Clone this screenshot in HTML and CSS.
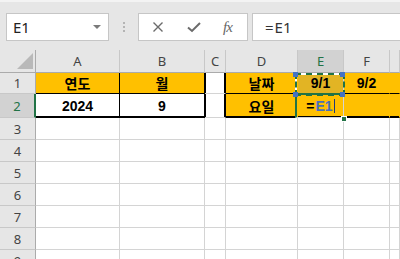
FILE: index.html
```html
<!DOCTYPE html>
<html>
<head>
<meta charset="utf-8">
<link rel="stylesheet" href="styles.css">
</head>
<body>
<div class="app">
  <div class="toolbar">
    <div class="namebox">
      <span class="name">E1</span>
      <span class="caret"></span>
    </div>
    <div class="grip"><i></i><i></i><i></i></div>
    <div class="fxbox">
      <svg class="ico" width="12" height="12" viewBox="0 0 12 12"><path d="M1.5 1.5L10.5 10.5M10.5 1.5L1.5 10.5" stroke="#6b6b6b" stroke-width="1.4" fill="none"/></svg>
      <svg class="ico" width="14" height="12" viewBox="0 0 14 12"><path d="M1 6.5L5 10L13 2" stroke="#6b6b6b" stroke-width="2" fill="none"/></svg>
      <span class="fx">fx</span>
    </div>
    <div class="formula"><span class="feq">=</span><span>E1</span></div>
  </div>
  <div class="sheet">
    <div class="corner"><span class="tri"></span></div>
    <div class="hd">A</div>
    <div class="hd">B</div>
    <div class="hd">C</div>
    <div class="hd">D</div>
    <div class="hd sel">E</div>
    <div class="hd">F</div>
    <div class="hd"></div>

    <div class="rh">1</div>
    <div class="c y bb br">연도</div>
    <div class="c y bb bthr">월</div>
    <div class="c gap"></div>
    <div class="c y bb nob">날짜</div>
    <div class="c yd bb nob">9/1</div>
    <div class="c y bb nob">9/2</div>
    <div class="c y bb nob"></div>

    <div class="rh sel2">2</div>
    <div class="c bthb br">2024</div>
    <div class="c bthb bthr">9</div>
    <div class="c gap"></div>
    <div class="c y bthb nob">요일</div>
    <div class="c y bthb nob edit"><span class="eq">=</span><span class="ref">E1</span><span class="cursor"></span></div>
    <div class="c y bthb nob"></div>
    <div class="c y bthb nob"></div>

    <div class="rh">3</div><div class="c"></div><div class="c"></div><div class="c"></div><div class="c"></div><div class="c"></div><div class="c"></div><div class="c"></div>
    <div class="rh">4</div><div class="c"></div><div class="c"></div><div class="c"></div><div class="c"></div><div class="c"></div><div class="c"></div><div class="c"></div>
    <div class="rh">5</div><div class="c"></div><div class="c"></div><div class="c"></div><div class="c"></div><div class="c"></div><div class="c"></div><div class="c"></div>
    <div class="rh">6</div><div class="c"></div><div class="c"></div><div class="c"></div><div class="c"></div><div class="c"></div><div class="c"></div><div class="c"></div>
    <div class="rh">7</div><div class="c"></div><div class="c"></div><div class="c"></div><div class="c"></div><div class="c"></div><div class="c"></div><div class="c"></div>
    <div class="rh">8</div><div class="c"></div><div class="c"></div><div class="c"></div><div class="c"></div><div class="c"></div><div class="c"></div><div class="c"></div>
    <div class="rh">9</div><div class="c"></div><div class="c"></div><div class="c"></div><div class="c"></div><div class="c"></div><div class="c"></div><div class="c"></div>

    <div class="marquee"></div>
    <div class="active"></div>
    <span class="hdl h1"></span>
    <span class="hdl h2"></span>
    <span class="hdl h3"></span>
    <span class="hdl h4"></span>
    <span class="fill"></span>
  </div>
</div>
</body>
</html>
```
FILE: styles.css
```css
html, body {
  margin: 0;
  padding: 0;
  background: #ffffff;
}
.app {
  width: 400px;
  height: 259px;
  overflow: hidden;
}
.toolbar {
  box-sizing: border-box;
  height: 50px;
  background: #e6e6e6;
  border-top: 2px solid #f3f3f3;
  padding-top: 11px;
  display: flex;
  align-items: flex-start;
}
.namebox {
  box-sizing: border-box;
  margin-left: 6px;
  width: 103px;
  height: 28px;
  background: #fff;
  border: 1px solid #c6c6c6;
  display: flex;
  align-items: center;
  justify-content: space-between;
  padding: 0 7px 0 6px;
}
.name {
  font: 400 15px "Noto Sans", sans-serif;
  color: #222;
}
.caret {
  width: 0;
  height: 0;
  border-left: 4px solid transparent;
  border-right: 4px solid transparent;
  border-top: 4px solid #7a7a7a;
}
.grip {
  width: 29px;
  height: 28px;
  display: flex;
  flex-direction: column;
  align-items: center;
  justify-content: center;
  gap: 2px;
}
.grip i {
  display: block;
  width: 2px;
  height: 2px;
  background: #b4b4b4;
}
.fxbox {
  box-sizing: border-box;
  width: 110px;
  height: 28px;
  background: #fff;
  border: 1px solid #c6c6c6;
  display: flex;
  align-items: center;
  padding-left: 13px;
}
.fxbox .ico:first-child {
  margin-right: 23px;
}
.fx {
  margin-left: 22px;
  font: italic 400 15px "Liberation Serif", serif;
  color: #666;
  letter-spacing: -1px;
}
.formula {
  box-sizing: border-box;
  flex: 1;
  margin-left: 4px;
  margin-right: -3px;
  height: 28px;
  background: #fff;
  border: 1px solid #c6c6c6;
  display: flex;
  align-items: center;
  padding-left: 12px;
  font: 400 15px "Noto Sans", sans-serif;
  color: #333;
}
.feq {
  margin-right: 1px;
}
.sheet {
  position: relative;
  display: grid;
  grid-template-columns: 36px 84px 85px 21px 72px 46px 46px 1fr;
  grid-template-rows: 23px 21px 24px repeat(7, 22px);
}
.sheet > div {
  box-sizing: border-box;
  border-right: 1px solid #d4d4d4;
  border-bottom: 1px solid #d4d4d4;
  display: flex;
  align-items: center;
  justify-content: center;
}
.sheet > .corner {
  position: relative;
  background: #e6e6e6;
  border-right: 1px solid #ababab;
  border-bottom: 1px solid #ababab;
}
.tri {
  position: absolute;
  right: 2px;
  bottom: 3px;
  width: 0;
  height: 0;
  border-left: 16px solid transparent;
  border-bottom: 16px solid #b9b9b9;
}
.sheet > .hd {
  background: #e6e6e6;
  border-right-color: #c8c8c8;
  border-bottom-color: #ababab;
  font: 400 13px "Noto Sans", sans-serif;
  color: #444;
}
.sheet > .hd.sel {
  background: #d2d2d2;
  color: #217346;
}
.sheet > .rh {
  background: #e6e6e6;
  border-right: 1px solid #ababab;
  border-bottom-color: #c8c8c8;
  font: 400 13px "Noto Sans", sans-serif;
  color: #444;
}
.sheet > .rh.sel2 {
  background: #d2d2d2;
  color: #217346;
  border-right: 2px solid #217346;
}
.sheet > .c {
  font: 700 14px "Liberation Sans", "Noto Sans CJK KR", sans-serif;
  color: #000;
  background: #fff;
}
.sheet > .y {
  background: #ffc000;
}
.sheet > .yd {
  background: #e2b424;
}
.sheet > .bb {
  border-bottom-color: #000;
}
.sheet > .br {
  border-right-color: #000;
}
.sheet > .bthr {
  border-right-color: #000;
}
.sheet > .bthb {
  border-bottom-color: #000;
  box-shadow: inset 0 -1px 0 #000;
}
.sheet > .gap {
  border-right-color: #000;
  box-shadow: inset 1px 0 0 #000, inset -1px 0 0 #000;
}
.sheet > .nob {
  border-right-color: transparent;
}
.eq {
  color: #000;
  margin-right: 1px;
}
.ref {
  color: #4a6fb8;
}
.cursor {
  display: inline-block;
  width: 1px;
  height: 14px;
  margin-left: 1px;
  background: #1f3a7a;
}
.marquee {
  position: absolute;
  box-sizing: border-box;
  left: 295px;
  top: 23px;
  width: 49px;
  height: 22px;
  border: 2px solid #fff;
}
.marquee::after {
  content: "";
  position: absolute;
  left: -2px;
  top: -2px;
  right: -2px;
  bottom: -2px;
  border: 2px dashed #217346;
}
.active {
  position: absolute;
  box-sizing: border-box;
  left: 295px;
  top: 43px;
  width: 49px;
  height: 25px;
  border: 2px solid #217346;
}
.hdl {
  position: absolute;
  width: 5px;
  height: 5px;
  background: #4472c4;
}
.h1 { left: 293px; top: 22px; }
.h2 { left: 340px; top: 22px; }
.h3 { left: 293px; top: 42px; }
.h4 { left: 340px; top: 42px; }
.fill {
  position: absolute;
  left: 341px;
  top: 66px;
  width: 4px;
  height: 4px;
  background: #217346;
  border: 1px solid #fff;
}
```
